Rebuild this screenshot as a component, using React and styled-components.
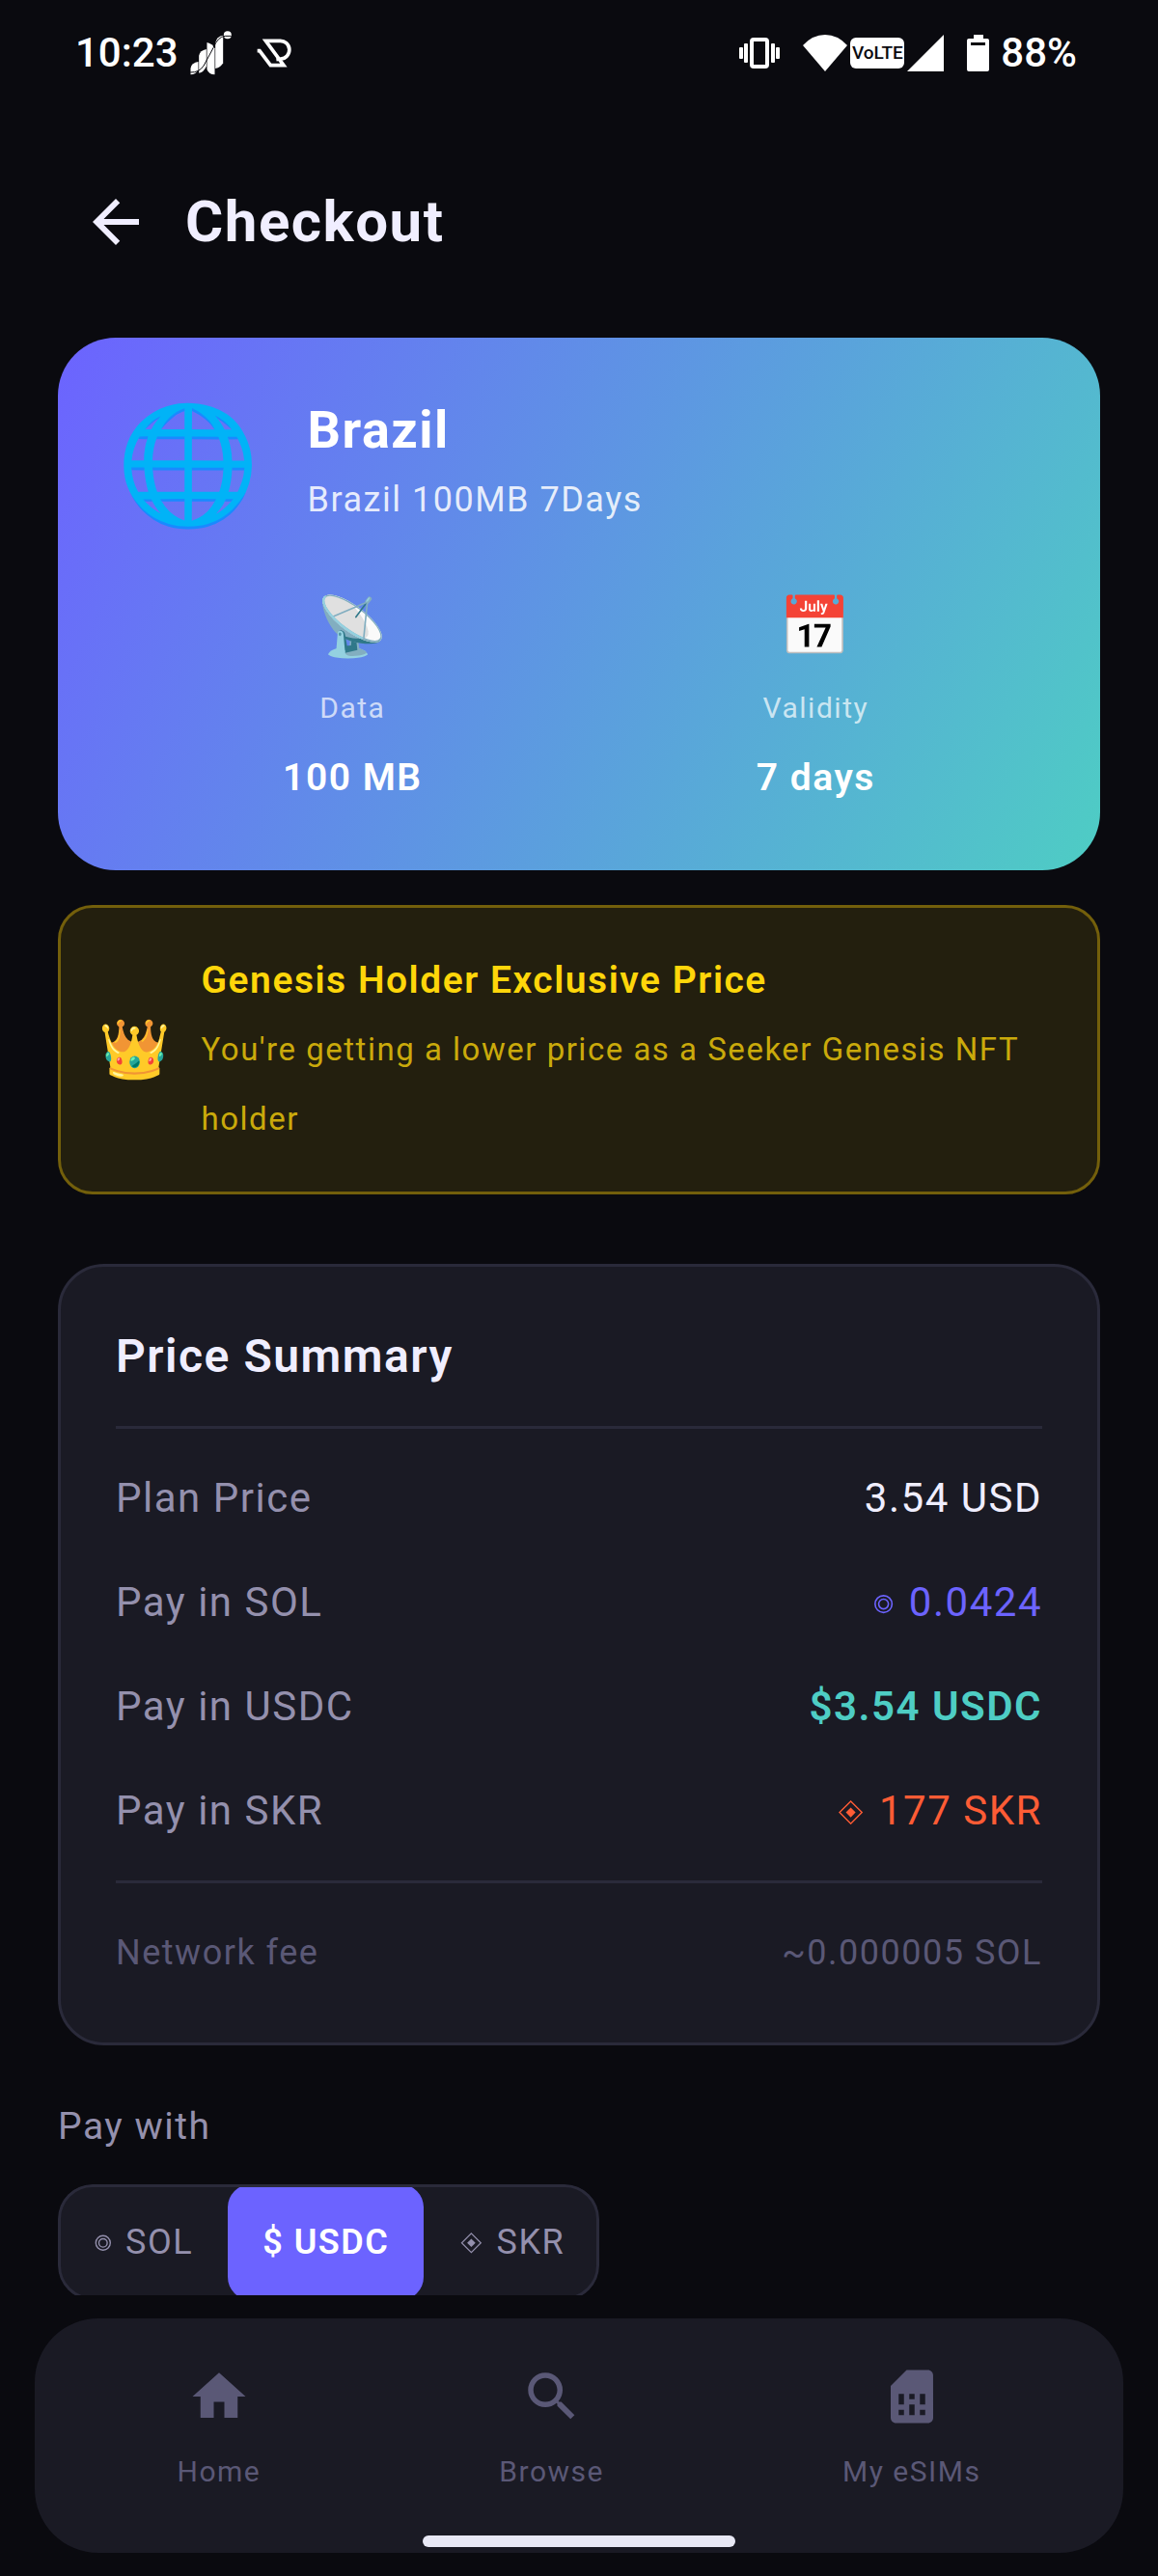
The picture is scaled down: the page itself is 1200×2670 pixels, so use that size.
import React, { useState } from "react";
import styled, { createGlobalStyle, css } from "styled-components";

const color = {
  page: "#0a0a0f",
  surface: "#1a1a24",
  line: "#2a2a3a",
  text: "#f0eeff",
  muted: "#9490ad",
  faint: "#5a5876",
  violet: "#6c63ff",
  teal: "#4ecdc4",
  orange: "#ff5c35",
  gold: "#ffd60a",
};

const Global = createGlobalStyle`
  *, *::before, *::after { box-sizing: border-box; }
  html, body, #root { height: 100%; }
  body {
    margin: 0;
    background: ${color.page};
    color: ${color.text};
    font: 400 42px/72px Roboto, "Noto Sans", sans-serif;
    letter-spacing: 0.036em;
  }
  h1, h2, p, dl, dt, dd { margin: 0; font: inherit; }
  button { font: inherit; letter-spacing: inherit; color: inherit; background: none; border: 0; padding: 0; cursor: pointer; }
  svg { display: block; flex: none; }
`;

const Screen = styled.div`
  position: relative;
  display: flex;
  flex-direction: column;
  height: 100vh;
`;

const StatusBar = styled.div`
  display: flex;
  justify-content: space-between;
  flex: none;
  height: 134px;
  padding: 19px 84px 0 78px;
  color: #fff;
  font-weight: 500;
  letter-spacing: 0;
`;

const StatusGroup = styled.div`
  display: flex;
  align-items: center;
  gap: ${(p) => p.$gap}px;
  height: 72px;
`;

const NetworkBadge = styled.span`
  display: grid;
  place-items: center;
  width: 56px;
  height: 32px;
  border-radius: 6px;
  background: #fff;
  color: ${color.page};
  font: 500 19px/32px Roboto, sans-serif;
`;

const TopBar = styled.header`
  display: flex;
  align-items: center;
  flex: none;
  height: 192px;
  padding: 0 48px;
`;

const BackButton = styled.button`
  display: grid;
  place-items: center;
  width: 144px;
  height: 144px;
`;

const PageTitle = styled.h1`
  && { font-size: 60px; font-weight: 700; }
`;

const Content = styled.main`
  display: flex;
  flex-direction: column;
  flex: 1;
  min-height: 0;
  overflow: hidden;
  padding: 24px 60px 0;
  > * { flex: none; }
`;

const Emoji = styled.span`
  font-size: ${(p) => p.$size}px;
  line-height: 72px;
`;

const PlanCard = styled.section`
  padding: 60px;
  border-radius: 60px;
  background: linear-gradient(117deg, ${color.violet}, ${color.teal});
  color: #fff;
`;

const PlanHead = styled.div`
  display: flex;
  align-items: center;
  gap: 48px;
`;

const PlanName = styled.h2`
  && { font-size: 54px; font-weight: 700; }
`;

const PlanDetail = styled.p`
  && { font-size: 36px; }
  color: rgba(255, 255, 255, 0.85);
`;

const Stats = styled.div`
  display: flex;
  justify-content: space-around;
  margin-top: 48px;
`;

const Stat = styled.div`
  display: flex;
  flex-direction: column;
  align-items: center;
`;

const StatIcon = styled.div`
  display: grid;
  place-items: center;
  height: 96px;
`;

const StatLabel = styled.div`
  font-size: 30px;
  color: rgba(255, 255, 255, 0.7);
`;

const StatValue = styled.div`
  font-size: 39px;
  font-weight: 600;
`;

const Banner = styled.section`
  display: flex;
  align-items: center;
  gap: 30px;
  margin-top: 36px;
  padding: 39px;
  border: 3px solid #735f0b;
  border-radius: 36px;
  background: #231f0e;
`;

const BannerTitle = styled.h2`
  && { font-size: 39px; font-weight: 600; }
  color: ${color.gold};
`;

const BannerText = styled.p`
  && { font-size: 33px; }
  color: #caaa0b;
`;

const Summary = styled.section`
  display: flex;
  flex-direction: column;
  gap: 36px;
  margin-top: 72px;
  padding: 57px;
  border: 3px solid ${color.line};
  border-radius: 48px;
  background: ${color.surface};
`;

const SummaryTitle = styled.h2`
  && { font-size: 48px; font-weight: 600; }
`;

const Divider = styled.div`
  height: 3px;
  background: ${color.line};
`;

const Rows = styled.dl`
  display: flex;
  flex-direction: column;
  gap: 36px;
`;

const Row = styled.div`
  display: flex;
  justify-content: space-between;
  height: 72px;
  font-size: ${(p) => (p.$small ? "36px" : "42px")};
  color: ${(p) => (p.$small ? color.faint : color.muted)};
`;

const Amount = styled.dd`
  && { font-weight: ${(p) => (p.$bold ? 600 : 400)}; }
  color: ${(p) => p.$color || "inherit"};
`;

const CoinMark = styled.svg`
  && { display: inline-block; }
  width: auto;
  height: 0.6em;
  margin-right: 2px;
  fill: none;
  stroke: currentColor;
`;

const PayLabel = styled.div`
  margin-top: 48px;
  font-size: 39px;
  color: ${color.muted};
`;

const Segments = styled.div`
  position: relative;
  display: flex;
  align-self: flex-start;
  margin-top: 24px;
  border-radius: 36px;
  background: ${color.surface};
  overflow: hidden;
  &::after {
    content: "";
    position: absolute;
    inset: 0;
    border: 3px solid ${color.line};
    border-radius: 36px;
    pointer-events: none;
  }
`;

const Segment = styled.button`
  && {
    height: 120px;
    padding: 24px 36px;
    font-size: 36px;
    border-radius: 24px;
    color: ${color.muted};
    ${(p) =>
      p.$active &&
      css`
        background: ${color.violet};
        color: #fff;
        font-weight: 600;
      `}
  }
`;

const NavBar = styled.nav`
  display: flex;
  justify-content: space-around;
  flex: none;
  margin: 24px 36px;
  padding: 48px 24px;
  border-radius: 66px;
  background: ${color.surface};
`;

const NavItem = styled.a`
  display: flex;
  flex-direction: column;
  align-items: center;
  gap: 9px;
  font-size: 30px;
  color: ${color.faint};
  text-decoration: none;
  svg { width: 66px; height: 66px; fill: currentColor; }
`;

const GestureBar = styled.div`
  position: absolute;
  bottom: 30px;
  left: calc(50% - 162px);
  width: 324px;
  height: 12px;
  border-radius: 6px;
  background: #e8e8f5;
`;

const SolMark = () => (
  <CoinMark viewBox="0 0 25 25" role="img" aria-label="◎" strokeWidth="1.6">
    <circle cx="12.5" cy="12.5" r="8.700" />
    <circle cx="12.5" cy="12.5" r="5" />
  </CoinMark>
);

const SkrMark = () => (
  <CoinMark viewBox="0 0 31 25" role="img" aria-label="◈" strokeWidth="1.4">
    <path d="M15.5 1L27 12.500L15.500 24L4 12.500Z" />
    <path d="M15.5 7.500L20.500 12.500L15.500 17.500L10.500 12.500Z" fill="currentColor" stroke="none" />
  </CoinMark>
);

const coins = { sol: SolMark, skr: SkrMark };

const ChartLogo = () => (
  <svg width="43" height="46" viewBox="20 20 128 138" fill="#fff">
    <path d="M21 136Q24 119 45 116V141Q38 156 21 156Z" />
    <path d="M47 97Q50 81 70 77V130Q62 148 47 151Z" />
    <path d="M72 56Q90 60 96 75V156Q78 156 72 140Z" />
    <path d="M98 57Q102 37 122 34V120Q115 134 98 137Z" />
    <circle cx="136" cy="33" r="12" />
    <path d="M20 149Q48 150 62 128L92 72Q106 38 128 36H148" fill="none" stroke={color.page} strokeWidth="3" />
  </svg>
);

const ArrowLogo = () => (
  <svg width="38" height="32" viewBox="227 43 114 94" fill="none" stroke="#fff" strokeWidth="11">
    <path d="M229 83H236L270 128H311L255 52H299A28 28 0 0 1 302 108L288 110" />
  </svg>
);

const VibrateIcon = () => (
  <svg width="42" height="32" viewBox="0 0 42 32" fill="#fff">
    <rect x="0" y="10" width="4" height="12" rx="1" />
    <rect x="5" y="6" width="4" height="20" rx="1" />
    <rect x="13" y="2" width="16" height="28" rx="2" fill="none" stroke="#fff" strokeWidth="4" />
    <rect x="33" y="6" width="4" height="20" rx="1" />
    <rect x="38" y="10" width="4" height="12" rx="1" />
  </svg>
);

const WifiIcon = () => (
  <svg width="46" height="38" viewBox="0 0 46 38" fill="#fff">
    <path d="M23 38L0 11Q10 0 23 0T46 11Z" />
  </svg>
);

const SignalIcon = () => (
  <svg width="38" height="38" viewBox="0 0 38 38" fill="#fff">
    <path d="M38 0V38H0Z" />
  </svg>
);

const BatteryIcon = () => (
  <svg width="23" height="38" viewBox="0 0 23 38" fill="#fff">
    <path d="M7 0H17V4H21Q23 4 23 6V36Q23 38 21 38H2Q0 38 0 36V6Q0 4 2 4H7Z" />
    <path d="M4 8H19V11H4Z" fill={color.page} />
  </svg>
);

const navItems = [
  { label: "Home", href: "#home", path: "M10 20v-6h4v6h5v-8h3L12 3 2 12h3v8z" },
  {
    label: "Browse",
    href: "#browse",
    path: "M15.5 14h-.79l-.28-.27A6.471 6.471 0 0 0 16 9.5 6.5 6.5 0 1 0 9.5 16c1.61 0 3.09-.59 4.23-1.57l.27.28v.79l5 4.99L20.49 19l-4.99-5zm-6 0C7.01 14 5 11.99 5 9.5S7.01 5 9.5 5 14 7.01 14 9.5 11.99 14 9.5 14z",
  },
  {
    label: "My eSIMs",
    href: "#esims",
    path: "M19.99 4c0-1.1-.89-2-1.99-2h-8L4 8v12c0 1.1.9 2 2 2h12.01c1.1 0 1.99-.9 1.99-2l-.01-16zM9 19H7v-2h2v2zm8 0h-2v-2h2v2zm-8-4H7v-4h2v4zm4 4h-2v-4h2v4zm0-6h-2v-2h2v2zm4 2h-2v-4h2v4z",
  },
];

const rows = [
  { label: "Plan Price", value: "3.54 USD", color: color.text },
  { label: "Pay in SOL", coin: "sol", value: "0.0424", color: color.violet },
  { label: "Pay in USDC", value: "$3.54 USDC", color: color.teal, bold: true },
  { label: "Pay in SKR", coin: "skr", value: "177 SKR", color: color.orange },
];

const methods = [
  { id: "sol", coin: "sol", label: "SOL" },
  { id: "usdc", label: "$ USDC" },
  { id: "skr", coin: "skr", label: "SKR" },
];

const WithCoin = ({ coin, children }) => {
  const Mark = coins[coin];
  return Mark ? <><Mark /> {children}</> : children;
};

export default function App() {
  const [method, setMethod] = useState("usdc");
  return (
    <Screen>
      <Global />
      <StatusBar>
        <StatusGroup $gap={12}>
          10:23
          <StatusGroup $gap={26}>
            <ChartLogo />
            <ArrowLogo />
          </StatusGroup>
        </StatusGroup>
        <StatusGroup $gap={24}>
          <VibrateIcon />
          <StatusGroup $gap={3}>
            <WifiIcon />
            <NetworkBadge>VoLTE</NetworkBadge>
            <SignalIcon />
          </StatusGroup>
          <StatusGroup $gap={12}>
            <BatteryIcon />
            88%
          </StatusGroup>
        </StatusGroup>
      </StatusBar>
      <TopBar>
        <BackButton aria-label="Back">
          <svg width="72" height="72" viewBox="0 0 24 24" fill={color.text}>
            <path d="M20 11H7.83l5.59-5.59L12 4l-8 8 8 8 1.41-1.41L7.83 13H20v-2z" />
          </svg>
        </BackButton>
        <PageTitle>Checkout</PageTitle>
      </TopBar>
      <Content>
        <PlanCard>
          <PlanHead>
            <Emoji $size={120}>🌐</Emoji>
            <div>
              <PlanName>Brazil</PlanName>
              <PlanDetail>Brazil 100MB 7Days</PlanDetail>
            </div>
          </PlanHead>
          <Stats>
            <Stat>
              <StatIcon><Emoji $size={60}>📡</Emoji></StatIcon>
              <StatLabel>Data</StatLabel>
              <StatValue>100 MB</StatValue>
            </Stat>
            <Stat>
              <StatIcon><Emoji $size={60}>📅</Emoji></StatIcon>
              <StatLabel>Validity</StatLabel>
              <StatValue>7 days</StatValue>
            </Stat>
          </Stats>
        </PlanCard>
        <Banner>
          <Emoji $size={60}>👑</Emoji>
          <div>
            <BannerTitle>Genesis Holder Exclusive Price</BannerTitle>
            <BannerText>You're getting a lower price as a Seeker Genesis NFT holder</BannerText>
          </div>
        </Banner>
        <Summary>
          <SummaryTitle>Price Summary</SummaryTitle>
          <Divider />
          <Rows>
            {rows.map((row) => (
              <Row key={row.label}>
                <dt>{row.label}</dt>
                <Amount $color={row.color} $bold={row.bold}>
                  <WithCoin coin={row.coin}>{row.value}</WithCoin>
                </Amount>
              </Row>
            ))}
          </Rows>
          <Divider />
          <Rows>
            <Row $small>
              <dt>Network fee</dt>
              <Amount>~0.000005 SOL</Amount>
            </Row>
          </Rows>
        </Summary>
        <PayLabel id="pay-with">Pay with</PayLabel>
        <Segments role="group" aria-labelledby="pay-with">
          {methods.map((m) => (
            <Segment key={m.id} $active={m.id === method} aria-pressed={m.id === method} onClick={() => setMethod(m.id)}>
              <WithCoin coin={m.coin}>{m.label}</WithCoin>
            </Segment>
          ))}
        </Segments>
      </Content>
      <NavBar>
        {navItems.map((item) => (
          <NavItem key={item.label} href={item.href}>
            <svg viewBox="0 0 24 24"><path d={item.path} /></svg>
            {item.label}
          </NavItem>
        ))}
      </NavBar>
      <GestureBar />
    </Screen>
  );
}
